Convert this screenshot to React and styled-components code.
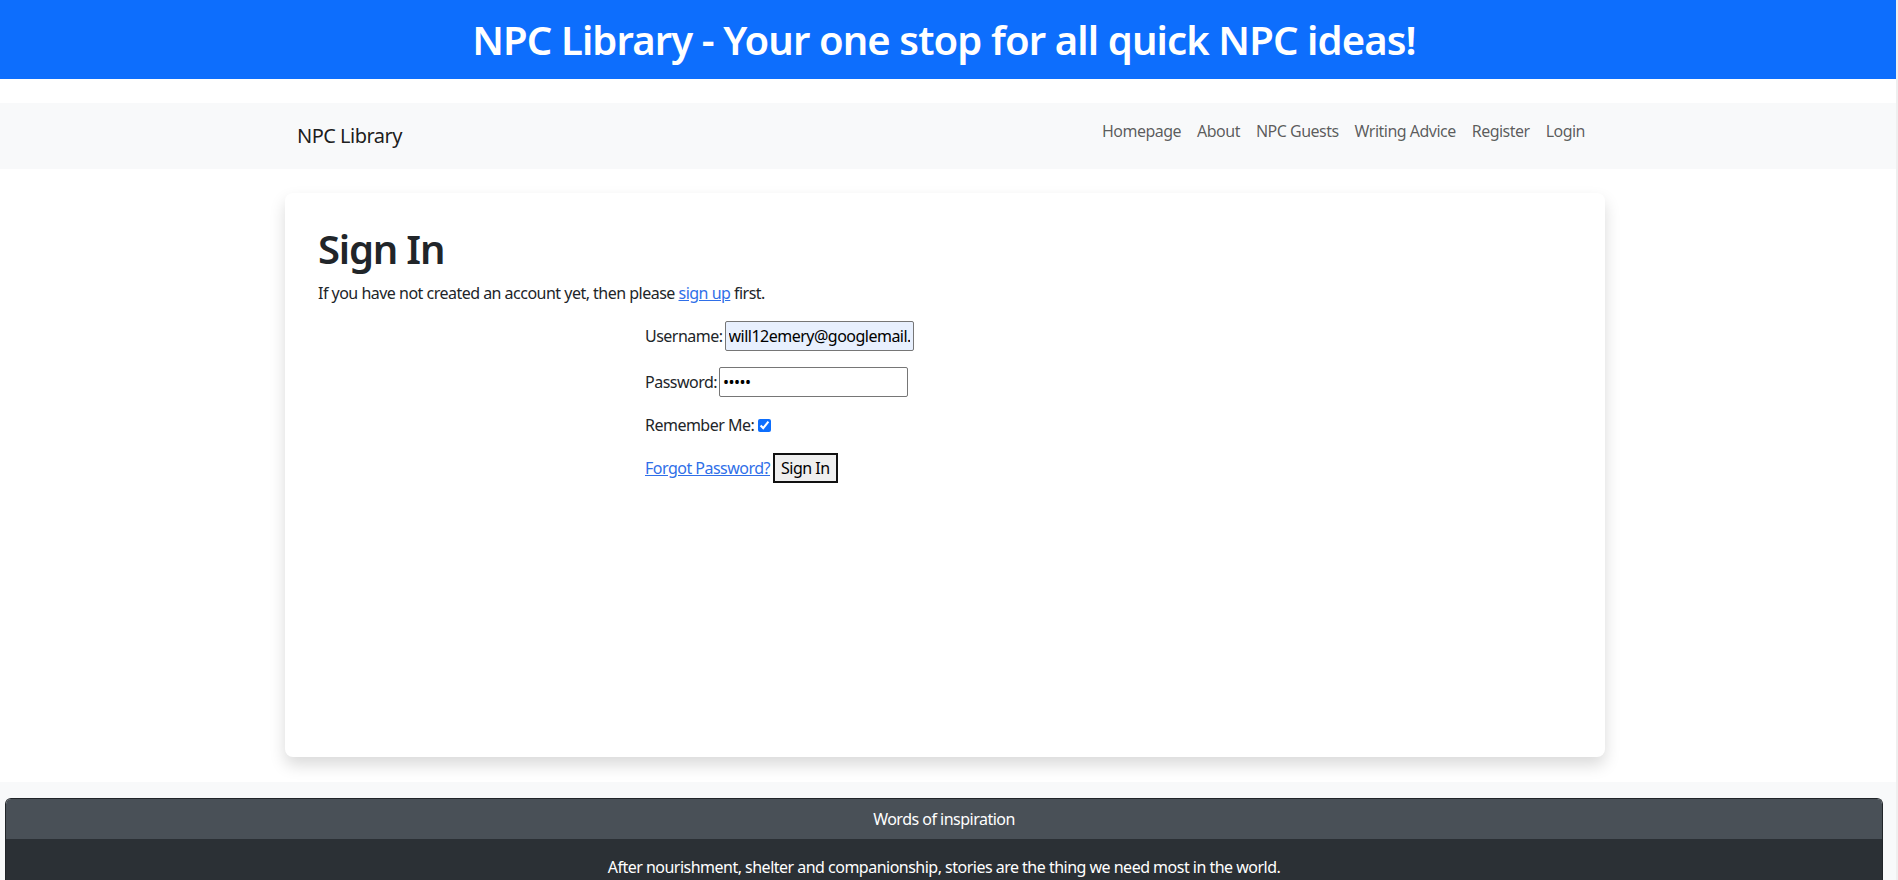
import React from "react"
import styled, { createGlobalStyle } from "styled-components"

const GlobalStyle = createGlobalStyle`
  * { box-sizing: border-box; }
  body {
    margin: 0;
    font-family: "Noto Sans", "Open Sans", sans-serif;
    font-size: 16px;
    line-height: 1.5;
    letter-spacing: -0.032em;
    color: #212529;
    background: #fff;
  }
  #root {
    border-right: 2px solid #efefef;
  }
`

// top banner
const Banner = styled.header`
  background: #0d6efd;
  color: #fff;
  padding: 16px 0 15px;
  text-align: center;
`
const BannerTitle = styled.h1`
  margin: 0 8px 0 0;
  font-size: 40px;
  font-weight: 600;
  line-height: 1.2;
  letter-spacing: -0.022em;
`

// shared centred column (page centre sits a few px left, as in the source)
const Container = styled.div`
  max-width: 1320px;
  margin: 0 auto 0 max(0px, calc(50% - 663px));
`

// navbar
const Navbar = styled.nav`
  margin-top: 24px;
  background: #f8f9fa;
  padding: 8px 0;
`
const NavInner = styled(Container)`
  display: flex;
  align-items: center;
  justify-content: space-between;
  min-height: 50px;
  padding: 0 12px;
`
const Brand = styled.a`
  font-size: 20px;
  line-height: 30px;
  padding: 5px 0;
  color: rgba(0, 0, 0, 0.9);
  text-decoration: none;
`
const NavList = styled.ul`
  display: flex;
  list-style: none;
  margin: 0 0 10px;
  padding: 0;
`
const NavLink = styled.a`
  display: block;
  padding: 8px;
  color: rgba(0, 0, 0, 0.65);
  text-decoration: none;
`

// main card
const Main = styled.main`
  padding: 24px 0 25px;
`
const Card = styled(Container)`
  background: #fff;
  border-radius: 8px;
  box-shadow: 0 8px 16px rgba(0, 0, 0, 0.15);
  padding: 32px 33px;
  min-height: 564px;
`
const Heading = styled.h1`
  margin: 0 0 8px;
  font-size: 40px;
  font-weight: 600;
  line-height: 1.2;
  letter-spacing: -0.03em;
`
const Text = styled.p`
  margin: 0 0 16px;
`
const Link = styled.a`
  color: #2f6fe8;
  text-decoration: underline;
`

// sign in form
const Form = styled.form`
  width: 600px;
  margin: 0 auto;
`
const Row = styled.p`
  display: flex;
  align-items: center;
  margin: 0 0 16px;
  min-height: ${(p) => (p.$tall ? "30px" : "24px")};
`
const Label = styled.label`
  margin-right: 2px;
`
const Input = styled.input`
  width: 189px;
  height: 30px;
  font: inherit;
  letter-spacing: inherit;
  padding: 1px 3px;
  border: 1px solid #767676;
  border-radius: 2px;
  background: ${(p) => (p.$filled ? "#e8f0fe" : "#fff")};
  color: #000;
`
const Check = styled.input`
  width: 13px;
  height: 13px;
  margin: 0 0 0 2px;
  accent-color: #0d6efd;
`
const Button = styled.button`
  margin-left: 3px;
  height: 30px;
  padding: 1px 6px;
  font: inherit;
  letter-spacing: inherit;
  background: #efefef;
  border: 2px solid #111;
  color: #000;
`

// footer
const Footer = styled.footer`
  background: #f8f9fa;
  padding: 16px 13px 0 5px;
`
const Quote = styled.div`
  border: 1px solid #212529;
  border-bottom: none;
  border-radius: 6px 6px 0 0;
  overflow: hidden;
  color: #fff;
  text-align: center;
`
const QuoteHead = styled.div`
  background: #495057;
  padding: 8px 16px;
`
const QuoteBody = styled.div`
  background: #2b3035;
  padding: 16px 16px 24px;
`

const links = ["Homepage", "About", "NPC Guests", "Writing Advice", "Register", "Login"]

const App = () => {
  return (
    <>
      <GlobalStyle />
      <Banner>
        <BannerTitle>NPC Library - Your one stop for all quick NPC ideas!</BannerTitle>
      </Banner>
      <Navbar>
        <NavInner>
          <Brand href="#">NPC Library</Brand>
          <NavList>
            {links.map((l) => (
              <li key={l}>
                <NavLink href="#">{l}</NavLink>
              </li>
            ))}
          </NavList>
        </NavInner>
      </Navbar>
      <Main>
        <Card>
          <Heading>Sign In</Heading>
          <Text>
            If you have not created an account yet, then please <Link href="#">sign up</Link> first.
          </Text>
          <Form onSubmit={(e) => e.preventDefault()}>
            <Row $tall>
              <Label>Username:</Label>
              <Input $filled type="text" defaultValue="will12emery@googlemail.com" />
            </Row>
            <Row $tall>
              <Label>Password:</Label>
              <Input type="password" defaultValue="abcde" />
            </Row>
            <Row>
              <Label>Remember Me:</Label>
              <Check type="checkbox" defaultChecked />
            </Row>
            <Row $tall>
              <Link href="#">Forgot Password?</Link>
              <Button type="submit">Sign In</Button>
            </Row>
          </Form>
        </Card>
      </Main>
      <Footer>
        <Quote>
          <QuoteHead>Words of inspiration</QuoteHead>
          <QuoteBody>
            After nourishment, shelter and companionship, stories are the thing we need most in the world.
          </QuoteBody>
        </Quote>
      </Footer>
    </>
  )
}

export default App
